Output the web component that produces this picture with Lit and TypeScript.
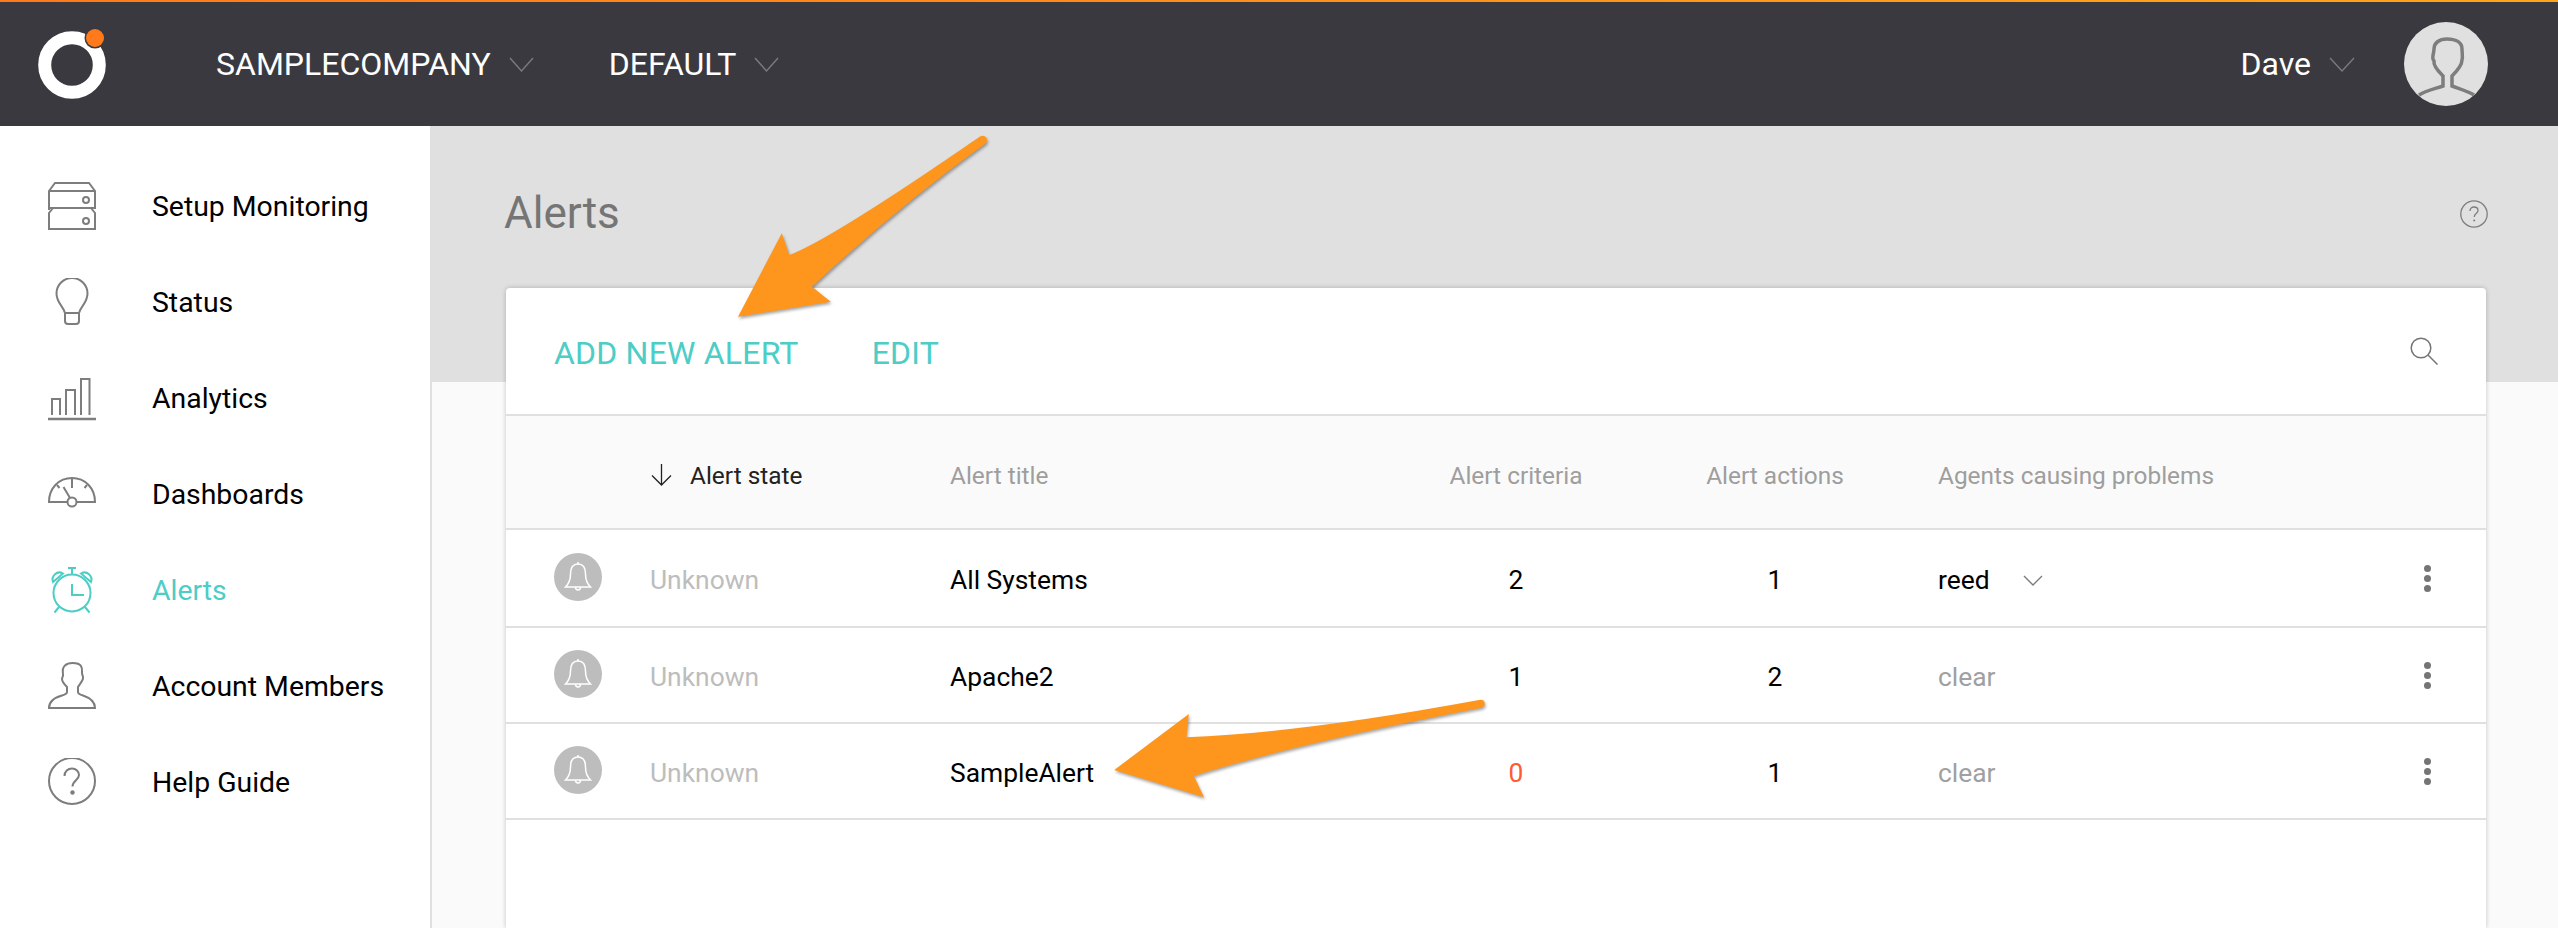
import { LitElement, html, css, svg } from "lit";
import { customElement } from "lit/decorators.js";

const chevron = (w: number, h: number) => html`<svg class="chev" width=${w} height=${h} viewBox="0 0 ${w} ${h}">
  <path d="M1 1 L${w / 2} ${h - 1} L${w - 1} 1" fill="none" stroke="currentColor" stroke-width="1.4" />
</svg>`;

const personPath =
  "M1 46 C1 39 7 35.5 14 33.5 C17 32.7 19 32 19 30 L19 25 C16 22 14 20 14 17 C14 15.5 15.5 14 15 12 C14.5 9 14 6 17 3.5 C19 1.5 22 1 24.5 1 C28 1 31.5 1.5 33 4 C34.5 6.5 34 9 34 11 C34 13 35.5 14.5 35 16.5 C34.5 19 32 22 30 25 L30 30 C30 32 32 32.7 35 33.5 C41 35.5 47 39 47 46 Z";

// sidebar icons, all on a 48 box
const navIcons: Record<string, unknown> = {
  server: svg`
    <path d="M1 26 V9 L7 1 H41 L47 9 V26 Z M1 9 H47 M1 26 L1 28 M5 26 L1 31 V47 H47 V31 L43 26" />
    <circle cx="38" cy="18" r="3" />
    <circle cx="38" cy="39" r="3" />`,
  bulb: svg`
    <path d="M17 35 C15.5 28 8.5 25 8.5 15.5 A15.5 15.5 0 0 1 39.5 15.5 C39.5 25 32.5 28 31 35 Z" />
    <path d="M17 35 V43 Q17 46 20 46 H28 Q31 46 31 43 V35" />`,
  bars: svg`
    <path d="M4 41 V25 H12 V41 M18 41 V16 H27 V41 M33 41 V5 H41.5 V41" />
    <path d="M0 45 H48" stroke-width="2.6" />`,
  gauge: svg`
    <path d="M19.5 32 H1 C1 18 11 8 24 8 C37 8 47 18 47 32 H28.5" />
    <circle cx="24" cy="32" r="4.5" />
    <path d="M24 8 V18 M15.5 17 L22 28 M9 15 L11.5 18 M39 15 L36.5 18" />`,
  clock: svg`
    <circle cx="24" cy="27" r="18.5" />
    <path d="M24 18 V29 H36 M24 2 V8 M20 2 H28" />
    <path d="M5 16 C3 10 9 4 15 7.5 Z M43 16 C45 10 39 4 33 7.5 Z" />
    <path d="M11 41 L6.5 46.5 M37 41 L41.5 46.5" />`,
  person: svg`<path d=${personPath} />`,
  help: svg`
    <circle cx="24" cy="23" r="23" />
    <path d="M16.5 18 C16.5 13.5 20 10.5 24 10.5 C28 10.5 31 13.5 31 17 C31 22 24.5 22.5 24.5 28.5" />
    <circle class="dot" cx="24.5" cy="34.5" r="2.2" />`,
};

const navItems = [
  { label: "Setup Monitoring", icon: "server" },
  { label: "Status", icon: "bulb" },
  { label: "Analytics", icon: "bars" },
  { label: "Dashboards", icon: "gauge" },
  { label: "Alerts", icon: "clock", active: true },
  { label: "Account Members", icon: "person" },
  { label: "Help Guide", icon: "help" },
];

const alerts = [
  { title: "All Systems", criteria: 2, actions: 1, agent: "reed" },
  { title: "Apache2", criteria: 1, actions: 2, agent: "clear" },
  { title: "SampleAlert", criteria: 0, actions: 1, agent: "clear" },
];

@customElement("app-root")
export class AppRoot extends LitElement {
  static styles = css`
    :host {
      display: block;
      height: 928px;
      overflow: hidden;
      position: relative;
      font-family: Roboto, sans-serif;
      background: #fff;
    }
    .topbar {
      height: 124px;
      border-top: 2px solid;
      border-image: linear-gradient(90deg, #ff7a1a, #ffa51a) 1;
      background: #3a393f;
      color: #fff;
      display: flex;
      align-items: center;
      font-size: 32px;
    }
    .logo {
      margin-left: 36px;
      margin-right: 108px;
    }
    .menu {
      display: flex;
      align-items: center;
      gap: 18px;
      margin-right: 75px;
    }
    .chev {
      color: #7b7a80;
      display: block;
    }
    .user {
      margin-left: auto;
      margin-right: 70px;
      display: flex;
      align-items: center;
    }
    .user .menu {
      margin-right: 49px;
    }
    .avatar {
      width: 84px;
      height: 84px;
      border-radius: 50%;
      background: #e0e0e0;
      overflow: hidden;
    }
    .avatar svg {
      display: block;
    }
    .body {
      display: flex;
      height: 802px;
    }
    .side {
      width: 430px;
      padding-top: 32px;
      box-sizing: content-box;
      border-right: 2px solid #e0e0e0;
    }
    .nav-row {
      height: 96px;
      display: flex;
      align-items: center;
      padding-left: 48px;
      gap: 56px;
      font-size: 28.4px;
      color: #000;
    }
    .nav-row svg {
      fill: none;
      stroke: #7d7d7d;
      stroke-width: 2;
      display: block;
    }
    .nav-row .dot {
      fill: #7d7d7d;
      stroke: none;
    }
    .nav-row.active {
      color: #4ccdc6;
    }
    .nav-row.active svg {
      stroke: #4ccdc6;
    }
    .main {
      flex: 1;
      display: flex;
      flex-direction: column;
      padding: 0 72px 0 74px;
      background: linear-gradient(#e0e0e0 256px, #fafafa 256px);
    }
    .title-row {
      height: 150px;
      padding-top: 12px;
      display: flex;
      align-items: center;
      justify-content: space-between;
    }
    h1 {
      margin: 0 0 0 -2px;
      font-size: 44px;
      font-weight: 400;
      color: #757575;
    }
    .title-help {
      margin-right: -2px;
      margin-top: 2px;
      display: block;
    }
    .card {
      flex: 1;
      background: #fff;
      border-radius: 4px 4px 0 0;
      box-shadow: 0 0 5px rgba(0, 0, 0, 0.22);
    }
    .toolbar {
      height: 126px;
      display: flex;
      align-items: center;
      padding: 0 48px;
      gap: 73px;
      font-size: 32px;
      letter-spacing: 0.2px;
      color: #4ccdc6;
    }
    .toolbar span {
      padding-top: 3px;
    }
    .toolbar svg {
      margin-left: auto;
      display: block;
    }
    .row {
      display: grid;
      grid-template-columns: 96px 300px 466px 200px 318px 1fr 30px;
      align-items: center;
      height: 94px;
      padding: 0 44px 0 48px;
      border-bottom: 2px solid #e0e0e0;
      font-size: 26.4px;
      color: #000;
    }
    .row > span {
      padding-top: 4px;
    }
    .head {
      background: #fafafa;
      border-top: 2px solid #e0e0e0;
      font-size: 24.4px;
      color: #9e9e9e;
      padding-top: 2px;
      height: 110px;
    }
    .first {
      height: 96px;
    }
    .sorted {
      display: flex;
      align-items: center;
      gap: 18px;
      color: #222;
      margin-left: 1px;
    }
    .center {
      text-align: center;
    }
    .agent {
      padding-left: 4px;
      display: flex;
      align-items: center;
      gap: 33px;
    }
    .muted {
      color: #a0a0a0;
    }
    .state {
      color: #bdbdbd;
    }
    .failed {
      color: #ff5a36;
    }
    .row > .bell {
      width: 48px;
      height: 48px;
      padding: 0;
      margin-top: -2px;
      border-radius: 50%;
      background: #bdbdbd;
      display: flex;
      align-items: center;
      justify-content: center;
    }
    .row > .kebab {
      padding: 0;
      display: flex;
      flex-direction: column;
      align-items: center;
      gap: 3px;
    }
    .kebab i {
      width: 7px;
      height: 7px;
      border-radius: 50%;
      background: #757575;
    }
    .arrows {
      position: absolute;
      left: 0;
      top: 0;
      pointer-events: none;
      filter: drop-shadow(1px 2px 1.5px rgba(0, 0, 0, 0.35));
    }
  `;

  renderBell() {
    return html`<span class="bell">
      <svg width="30" height="32" viewBox="0 0 30 32" fill="none" stroke="#fff" stroke-width="1.5">
        <path d="M15 3 C9.5 3 7.5 7.5 7.5 13 C7.5 19 6 22.5 2.5 26 H27.5 C24 22.5 22.5 19 22.5 13 C22.5 7.5 20.5 3 15 3 Z" />
        <path d="M15 1 V3 M12.5 26 C12.5 30 17.5 30 17.5 26" />
      </svg>
    </span>`;
  }

  renderRow(a: (typeof alerts)[number], i: number) {
    return html`<div class="row ${i === 0 ? "first" : ""}">
      ${this.renderBell()}
      <span class="state">Unknown</span>
      <span>${a.title}</span>
      <span class="center ${a.criteria === 0 ? "failed" : ""}">${a.criteria}</span>
      <span class="center">${a.actions}</span>
      ${a.agent === "clear"
        ? html`<span class="agent muted">clear</span>`
        : html`<span class="agent">${a.agent} ${chevron(20, 11)}</span>`}
      <span class="kebab"><i></i><i></i><i></i></span>
    </div>`;
  }

  render() {
    return html`
      <header class="topbar">
        <svg class="logo" width="72" height="72" viewBox="0 0 72 72">
          <circle cx="36" cy="37" r="27.3" fill="none" stroke="#fff" stroke-width="13" />
          <circle cx="59" cy="10" r="10.5" fill="#3a393f" />
          <circle cx="59" cy="10" r="9" fill="#ff7a1a" />
        </svg>
        <div class="menu"><span>SAMPLECOMPANY</span>${chevron(25, 15)}</div>
        <div class="menu"><span>DEFAULT</span>${chevron(25, 15)}</div>
        <div class="user">
          <div class="menu"><span>Dave</span>${chevron(26, 15)}</div>
          <div class="avatar">
            <svg width="84" height="84" viewBox="0 0 84 84" fill="none" stroke="#7d7d7d" stroke-width="3.5">
              <path d="M15 73 C21 69 30 67 39 64 V54 C35 50 29 44 30 39 C27 36 30 32 30 27 C30 21 35 17 43 17 C51 17 58 20 58 27 C58 31 59 35 58 38 C58 44 52 50 48 54 V64 C56 67 64 69 70 73" />
            </svg>
          </div>
        </div>
      </header>
      <div class="body">
        <nav class="side">
          ${navItems.map(
            (n) => html`<div class="nav-row ${n.active ? "active" : ""}">
              <svg width="48" height="48" viewBox="0 0 48 48">${navIcons[n.icon]}</svg>
              <span>${n.label}</span>
            </div>`
          )}
        </nav>
        <main class="main">
          <div class="title-row">
            <h1>Alerts</h1>
            <svg class="title-help" width="28" height="28" viewBox="0 0 28 28" fill="none" stroke="#7d7d7d" stroke-width="1.3">
              <circle cx="14" cy="14" r="13.2" />
              <path d="M10 11 C10 8.5 12 7 14 7 C16.5 7 18 8.6 18 10.5 C18 13.5 14.2 13.7 14.2 17" />
              <circle cx="14.2" cy="20.5" r="1" fill="#7d7d7d" stroke="none" />
            </svg>
          </div>
          <section class="card">
            <div class="toolbar">
              <span>ADD NEW ALERT</span>
              <span>EDIT</span>
              <svg width="28" height="28" viewBox="0 0 28 28" fill="none" stroke="#757575" stroke-width="1.5">
                <circle cx="11" cy="11" r="9.8" />
                <path d="M18 18 L27.5 27.5" />
              </svg>
            </div>
            <div class="row head">
              <span></span>
              <span class="sorted">
                <svg width="21" height="22" viewBox="0 0 21 22" fill="none" stroke="#222" stroke-width="1.3">
                  <path d="M10.5 0 V21 M1 11.5 L10.5 21 L20 11.5" />
                </svg>
                Alert state
              </span>
              <span>Alert title</span>
              <span class="center">Alert criteria</span>
              <span class="center">Alert actions</span>
              <span class="agent">Agents causing problems</span>
              <span></span>
            </div>
            ${alerts.map((a, i) => this.renderRow(a, i))}
          </section>
        </main>
      </div>
      <svg class="arrows" width="2558" height="928" viewBox="0 0 2558 928" fill="#fe951c">
        <path d="M980 136.5 Q984 134.5 986.5 138 Q988 141 985.5 143.5 Q900 205 812 286.7 L830.7 301.7 L738 316.7 L781.8 233.3 L789.3 255 Q830 240 980 136.5 Z" />
        <path d="M1479 700 Q1484 699 1484.7 703 Q1485 707 1480 708 Q1290 745 1193.8 776 L1204 797.3 L1114.2 770 L1188.8 714 L1186.5 737.3 Q1300 733 1479 700 Z" />
      </svg>
    `;
  }
}
